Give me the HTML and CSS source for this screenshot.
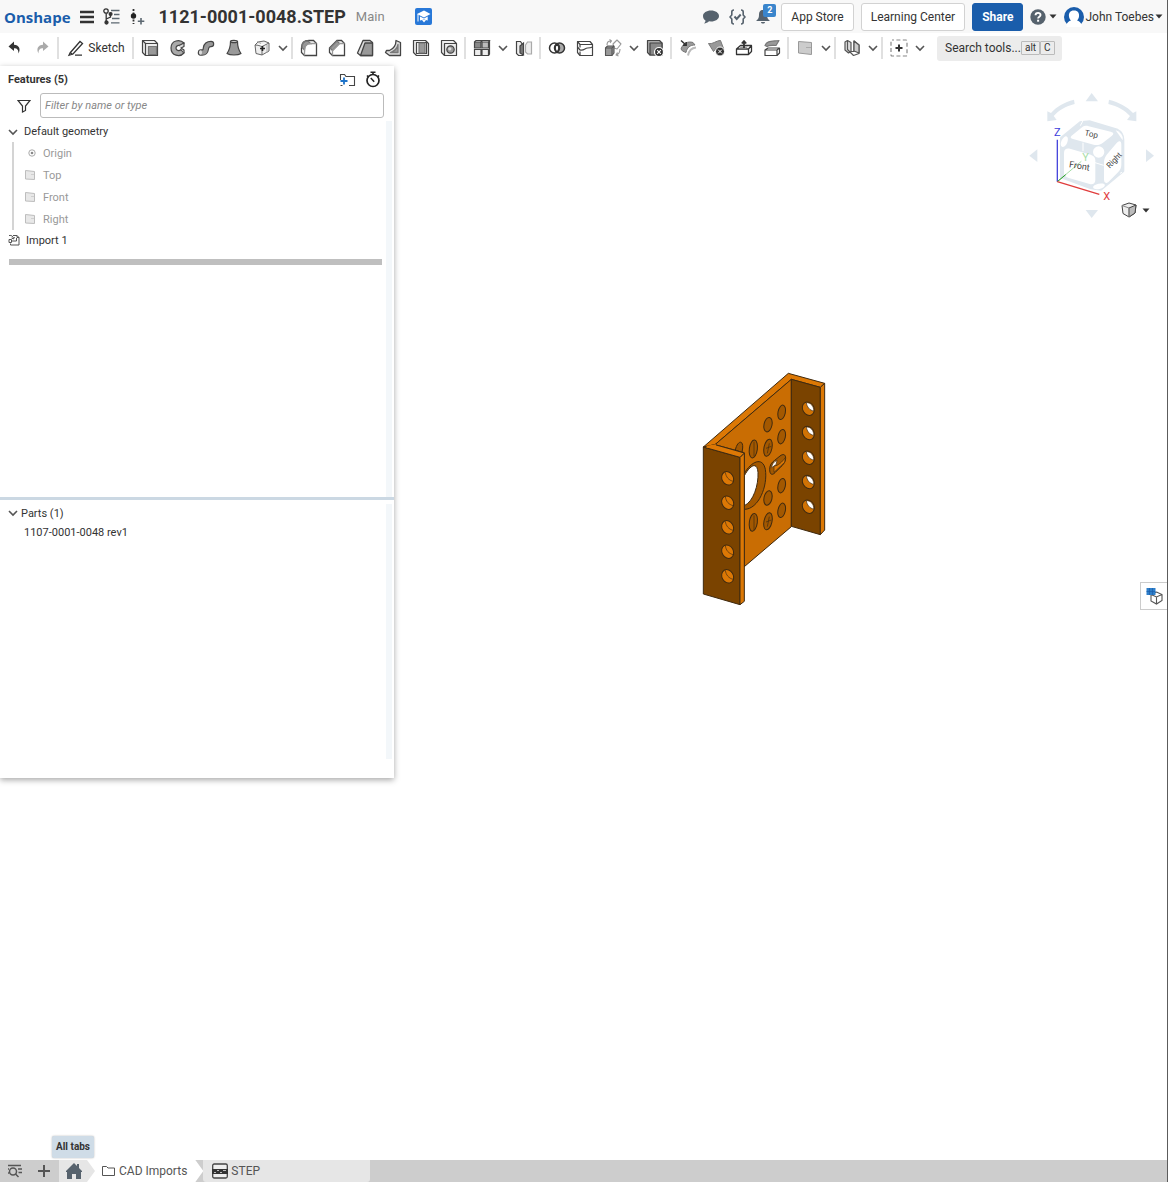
FILE: index.html
```html
<!DOCTYPE html>
<html lang="en">
<head>
    <meta charset="UTF-8">
    <meta name="viewport" content="width=device-width, initial-scale=1.0">
    <title>1121-0001-0048.STEP</title>
    <link rel="stylesheet" href="styles.css">
</head>
<body>

    <!-- shared symbols -->
    <svg class="defs" aria-hidden="true">
        <symbol id="chevron" viewBox="0 0 10 10"><path d="M1 3l4 4 4-4" fill="none" stroke="#555" stroke-width="1.6"/></symbol>
        <symbol id="caret" viewBox="0 0 8 5"><path d="M0.500 0.500h7l-3.500 4z" fill="#333"/></symbol>
        <symbol id="plane" viewBox="0 0 12 12"><path d="M1.500 1.500l9 1v8l-9-.5z" fill="#e8e8e8" stroke="#bdbdbd"/><path d="M7 5.500h3" stroke="#cfcfcf"/></symbol>
    </svg>

    <header class="topbar">
        <a class="logo" href="#">Onshape</a>
        <button class="icon-btn menu" aria-label="Menu">
            <svg width="14" height="14" viewBox="0 0 14 14"><path d="M0 2h14M0 7h14M0 12h14" stroke="#333" stroke-width="2.500"/></svg>
        </button>
        <button class="icon-btn versions" aria-label="Versions and history">
            <svg width="18" height="17" viewBox="0 0 18 17" fill="none" stroke="#333" stroke-width="1.300"><circle cx="3" cy="3" r="2.200"/><path d="M3.200 5.200v9M3.200 11l4.300-2V7"/><circle cx="7.600" cy="6" r="1.400" fill="#333"/><circle cx="3.500" cy="14.500" r="1.500" fill="#333"/><path d="M8 2.500h8.500M11 6.500h5.500M9 10.500h7.500M8 14.800h8.500" stroke="#5b6770"/></svg>
        </button>
        <button class="icon-btn insert" aria-label="Insert new element">
            <svg width="15" height="17" viewBox="0 0 15 17"><path d="M3.500 1v15" stroke="#333" stroke-width="1.800" stroke-dasharray="2 1.500"/><circle cx="3.500" cy="8" r="2.700" fill="#222"/><path d="M11 10v6.500M7.800 13.200h6.500" stroke="#5b6770" stroke-width="1.600"/></svg>
        </button>
        <h1 class="doc-title">1121-0001-0048.STEP</h1>
        <span class="branch">Main</span>
        <button class="icon-btn edu" aria-label="Education">
            <svg width="17" height="17" viewBox="0 0 17 17"><rect width="17" height="17" rx="2" fill="#2878d8"/><path d="M2 6l7-3.500L15.500 6 9 9.500z" fill="#fff"/><path d="M5 8.500v4L9 11.500l3.700 1v-4L9 10.500z" fill="#fff"/><path d="M7 12l2 2.500 2-2.500z" fill="#fff"/><path d="M3 6v7.500" stroke="#fff"/></svg>
        </button>

        <div class="topbar-right">
            <button class="icon-btn" aria-label="Comments">
                <svg width="16" height="14" viewBox="0 0 16 14"><path d="M8 0.500c4.500 0 8 2.400 8 5.500s-3.500 5.500-8 5.500l-2-.2C4.500 12.600 3 13.400 1 13.500c1-.8 1.500-2 1.500-3C1 9.500 0 8 0 6 0 2.900 3.500.500 8 .500z" fill="#56626d"/></svg>
            </button>
            <button class="icon-btn" aria-label="Properties">
                <svg width="17" height="16" viewBox="0 0 17 16" fill="none" stroke="#56626d" stroke-width="1.600"><path d="M5 1C3 1 2.800 1.500 2.800 3v3L1 8l1.800 2v3c0 1.500.2 2 2.200 2M12 1c2 0 2.200.5 2.200 2v3L16 8l-1.800 2v3c0 1.500-.2 2-2.200 2"/><path d="M5.500 7.500l2.200 2.500 4-4.500" stroke-width="2"/></svg>
            </button>
            <button class="icon-btn bell" aria-label="Notifications">
                <svg width="14" height="15" viewBox="0 0 14 15"><path d="M7 1c3 0 4 2 4 5 0 3 1 4 3 6H0c2-2 3-3 3-6 0-3 1-5 4-5zM5 13h4c0 2-4 2-4 0z" fill="#56626d"/></svg>
                <span class="badge">2</span>
            </button>
            <button class="btn">App Store</button>
            <button class="btn">Learning Center</button>
            <button class="btn btn-primary">Share</button>
            <button class="icon-btn help" aria-label="Help">
                <svg width="16" height="16" viewBox="0 0 16 16"><circle cx="8" cy="8" r="7.700" fill="#56626d"/><path d="M5.500 6.300C5.500 3 10.700 3.200 10.500 6c0 1.600-2.400 1.800-2.400 3.500" fill="none" stroke="#fff" stroke-width="1.900"/><rect x="7.100" y="10.700" width="2" height="2" fill="#fff"/></svg>
                <svg width="8" height="5"><use href="#caret"/></svg>
            </button>
            <button class="icon-btn user">
                <svg width="20" height="20" viewBox="0 0 20 20"><circle cx="10" cy="10" r="10" fill="#1a5dab"/><path d="M10 3.500c4 0 5.500 2.700 5 6-.2 1.600-1 3-2 4 2 .7 4 1.500 4.500 4.500V20h-15v-2c.5-3 2.500-3.800 4.500-4.500-1-1-1.800-2.400-2-4-.5-3.300 1-6 5-6z" fill="#fff"/></svg>
                <span>John Toebes</span>
                <svg width="8" height="5"><use href="#caret"/></svg>
            </button>
        </div>
    </header>

    <nav class="toolbar" aria-label="Tools">
        <button class="tool" aria-label="Undo"><svg viewBox="0 0 18 18"><path d="M9 2.500L3.500 7.500 9 12V9.200c3 0 4.500 1.300 4.500 5.300C16 10 14 6 9 5.800z" fill="#333"/></svg></button>
        <button class="tool" aria-label="Redo"><svg viewBox="0 0 18 18"><path d="M10 2.500l5.500 5-5.500 4.500V9.200c-3 0-4.500 1.300-4.500 5.300C3 10 5 6 10 5.800z" fill="#aaa"/></svg></button>
        <span class="sep"></span>
        <button class="tool tool-sketch"><svg viewBox="0 0 18 18" fill="none" stroke="#333" stroke-width="1.300"><path d="M3 14L13 2.500l2.500 2L6 15l-4 1.300zM3 13.500l2.800 2M8 16.200h7"/></svg>Sketch</button>
        <span class="sep"></span>
        <button class="tool" aria-label="Extrude"><svg viewBox="0 0 18 18" stroke="#444" stroke-width="1.200" stroke-linejoin="round"><path d="M1.500 1.500h12l3 3v12h-12l-3-3z" fill="#eee"/><path d="M1.500 1.500l3 3h12M4.500 4.500v12" fill="none"/><path d="M7.500 7.500h8v8h-8z" fill="#999" stroke="#777"/></svg></button>
        <button class="tool" aria-label="Revolve"><svg viewBox="0 0 18 18" stroke="#444" stroke-width="1.200" stroke-linejoin="round"><path d="M15 4C11 0 2 1 2 9s9 9.500 13 5l-3-3.500c-2 2-5 1-5-1.500s3-3.500 5-1.500z" fill="#aaa"/><path d="M10 6.500l5-2.500v3.500l-3 1.500 3 2V14" fill="#ddd"/></svg></button>
        <button class="tool" aria-label="Sweep"><svg viewBox="0 0 18 18" stroke-linecap="round"><path d="M4 13.500c4.500.5 4.500-1.500 5-4.500s2-4 5-4" fill="none" stroke="#444" stroke-width="6.500"/><path d="M4 13.500c4.500.5 4.500-1.500 5-4.500s2-4 5-4" fill="none" stroke="#999" stroke-width="4.200"/><ellipse cx="3.500" cy="13.500" rx="1.500" ry="2.200" fill="#ddd"/></svg></button>
        <button class="tool" aria-label="Loft"><svg viewBox="0 0 18 18" stroke="#444" stroke-width="1.200" stroke-linejoin="round"><path d="M5.500 2.500C5.500 7 4.500 11 2 14.500c3 2 11 2 14 0-2.500-3.500-3.500-7.500-3.500-12z" fill="#999"/><ellipse cx="9" cy="2.500" rx="3.500" ry="1.200" fill="#ccc"/></svg></button>
        <button class="tool" aria-label="Thicken"><svg viewBox="0 0 18 18" fill="none" stroke="#666"><path d="M2 6l3-3 6-1 5 2v8l-7 4-6-1.500zM2 6c3 0 5 1 7 1.500L16 4M9 7.500V16" fill="#eee"/><path d="M4 2.500l4 2M14 6v8" stroke="#aaa"/><path d="M9.500 7v5M7 9.500h5" stroke="#222" stroke-width="1.600"/></svg></button>
        <button class="tool-more" aria-label="More solid tools"><svg><use href="#chevron"/></svg></button>
        <span class="sep"></span>
        <button class="tool" aria-label="Fillet"><svg viewBox="0 0 18 18" stroke="#444" stroke-width="1.300"><path d="M1.500 9c0-5 2.500-7.500 7.500-7.500h4.500l3 3v12h-12l-3-3z" fill="#fff"/><path d="M4.500 11c0-4 2-6.500 6-6.500L8 2C4 2 2 4 2 8.500z" fill="#999" stroke="#777"/><path d="M4.500 16.500V11c0-4 2-6.500 6-6.500h6" fill="none" stroke="#999"/></svg></button>
        <button class="tool" aria-label="Chamfer"><svg viewBox="0 0 18 18" stroke="#444" stroke-width="1.300"><path d="M1.500 9L9 1.500h4.500l3 3v12h-12l-3-3z" fill="#fff"/><path d="M2 9l7-7 2.500 2.500-7 7z" fill="#999" stroke="#777"/><path d="M4.500 16.500v-5l7-7h5" fill="none" stroke="#999"/></svg></button>
        <button class="tool" aria-label="Draft"><svg viewBox="0 0 18 18" stroke="#444" stroke-width="1.300" stroke-linejoin="round"><path d="M7 1.500h7l2.500 2v13h-12L1.500 14z" fill="#ddd"/><path d="M9 4h7.500v12.500h-12z" fill="#999"/></svg></button>
        <button class="tool" aria-label="Rib"><svg viewBox="0 0 18 18" stroke="#444" stroke-width="1.300" stroke-linejoin="round"><path d="M12 1.500l4.500 2v13h-11l-4-3 1-2h3C10 9.500 12 6 12 1.500z" fill="#ddd"/><path d="M14 5.500v8H6.500C11 12 13 10 14 5.500z" fill="#999" stroke="#777"/></svg></button>
        <button class="tool" aria-label="Shell"><svg viewBox="0 0 18 18" stroke="#444" stroke-width="1.200" stroke-linejoin="round"><path d="M1.500 1.500h12l3 3v12h-12l-3-3z" fill="#eee"/><path d="M4.500 3.500h10v11h-10z" fill="#fff"/><path d="M7 4h6v10H7z" fill="#999" stroke="#777"/></svg></button>
        <button class="tool" aria-label="Hole"><svg viewBox="0 0 18 18" stroke="#444" stroke-width="1.200" stroke-linejoin="round"><path d="M1.500 1.500h12l3 3v12h-12l-3-3z" fill="#eee"/><path d="M4.500 16V4.500H16" fill="none"/><circle cx="10.500" cy="10.500" r="3.700" fill="#999"/><circle cx="9.800" cy="9.800" r="1.600" fill="#ddd" stroke="none"/></svg></button>
        <span class="sep"></span>
        <button class="tool" aria-label="Linear pattern"><svg viewBox="0 0 18 18" stroke="#444" stroke-width="1.200"><path d="M1.500 3h6.500v6H1.500z" fill="#888"/><path d="M9 3h6.500v6H9z" fill="#bbb"/><path d="M1.500 10.500h6.500v6H1.500zM9 10.500h6.500v6H9z" fill="#eee"/><path d="M1.500 3L3 1.500h5.500L8 3l1.500-1.500h7L15.500 3M16.500 1.500V15l-1 1.500" fill="none"/></svg></button>
        <button class="tool-more" aria-label="More patterns"><svg><use href="#chevron"/></svg></button>
        <button class="tool" aria-label="Mirror"><svg viewBox="0 0 18 18" stroke="#444" stroke-width="1.200"><path d="M1.500 2.500h4l2 3v11h-4l-2-2z" fill="#eee"/><path d="M5 7l3.500-3v12L5 14z" fill="#777"/><path d="M10.500 6l2-3h4v12h-4l-2-2z" fill="#eee" stroke="#aaa"/></svg></button>
        <span class="sep"></span>
        <button class="tool" aria-label="Boolean"><svg viewBox="0 0 18 18" stroke="#333" stroke-width="1.500"><circle cx="11.500" cy="9" r="5" fill="#aaa"/><circle cx="6.500" cy="9" r="5" fill="none"/><path d="M9 5c2.500 2 2.500 6 0 8-2.500-2-2.500-6 0-8z" fill="#fff"/></svg></button>
        <button class="tool" aria-label="Split"><svg viewBox="0 0 18 18" fill="none" stroke="#444" stroke-width="1.200" stroke-linejoin="round"><path d="M1.500 2.500h12.500l2.500 3v11H4l-2.500-3z" fill="#fff"/><path d="M1.500 2.500l2.500 3h12.500M4 5.500v3M4 12.500v4"/><path d="M1.500 8l2.500 3c4 1 5-2 7.500-2s3 0 5-1"/></svg></button>
        <button class="tool" aria-label="Transform"><svg viewBox="0 0 18 18" fill="none" stroke="#999" stroke-width="1.100" stroke-linejoin="round"><path d="M9 5l4-4 4 4-4 5-3-1zM3 6c0-3 1-4 4-4M5.500 .5L7.500 2 6 4M16 10c0 4-2 5.500-4 6M13.500 13.500L12 16l2.500 1"/><path d="M1.500 9l2-2H10v7l-2 2.500H1.500z" fill="#999" stroke="#555"/><path d="M1.500 9H8v7.500M8 9l2-2" stroke="#555"/></svg></button>
        <button class="tool-more" aria-label="More transform tools"><svg><use href="#chevron"/></svg></button>
        <button class="tool" aria-label="Delete part"><svg viewBox="0 0 18 18" stroke="#444" stroke-width="1.200" stroke-linejoin="round"><path d="M1.500 1.500h12l2.500 2.500v12H4l-2.500-2.500z" fill="#aaa"/><path d="M4 4h12v12H4z" fill="#888"/><circle cx="13" cy="13" r="4.500" fill="#333" stroke="#fff"/><path d="M11.200 11.200l3.600 3.600M14.800 11.200l-3.600 3.600" stroke="#fff"/></svg></button>
        <span class="sep"></span>
        <button class="tool" aria-label="Modify fillet"><svg viewBox="0 0 18 18" stroke="#777"><path d="M2 10c2-6 7-8 12-6.500l2 2.500C11 6 8 8.500 7 13.500L3.500 12z" fill="#999"/><path d="M9 16.500c1-5 3.500-7.500 8-8" fill="none" stroke="#bbb" stroke-width="2"/><path d="M2 1.500l5 4.500M7.200 3v3.200H4" fill="none" stroke="#333" stroke-width="1.500"/></svg></button>
        <button class="tool" aria-label="Delete face"><svg viewBox="0 0 18 18" stroke="#777"><path d="M1.500 4.500c4 1 8-3 12-3l3 8c-5-1-8 0-10 3z" fill="#999"/><circle cx="13" cy="12.500" r="4.500" fill="#333" stroke="#fff"/><path d="M11.200 10.700l3.600 3.600M14.800 10.700l-3.600 3.600" stroke="#fff"/></svg></button>
        <button class="tool" aria-label="Move face"><svg viewBox="0 0 18 18" fill="none" stroke="#333" stroke-width="1.300" stroke-linejoin="round"><path d="M1.500 10l4-3.500h11l-3 3.500v5.500h-12zM1.500 10h12M13.500 15.500l3-3V7"/><path d="M4 9.500l2-2h7l-2 2z" fill="#999" stroke="none"/><path d="M9 9V3M6.800 4.500L9 2l2.200 2.500" stroke-width="1.800"/></svg></button>
        <button class="tool" aria-label="Replace face"><svg viewBox="0 0 18 18" fill="none" stroke="#444" stroke-width="1.200" stroke-linejoin="round"><path d="M2 11l3-2h11.500l-2.500 2v5.500H2zM2 11h12M14 16.500l2.500-2.500V9"/><path d="M2 6.500c2-5 7-4 14-5l-3 5c-4 0-7-.5-9 1z" fill="#999" stroke="#777"/></svg></button>
        <span class="sep"></span>
        <button class="tool" aria-label="Plane"><svg viewBox="0 0 18 18"><path d="M2.500 2.500l13 1v12l-13-1.500z" fill="#ccc" stroke="#999"/><path d="M10 8.500h5" stroke="#aaa"/></svg></button>
        <button class="tool-more" aria-label="More planes"><svg><use href="#chevron"/></svg></button>
        <span class="sep"></span>
        <button class="tool" aria-label="Sheet metal"><svg viewBox="0 0 18 18" stroke="#555" stroke-width="1.200" stroke-linejoin="round"><path d="M2 3l2.500-1.500L8 3.500v9L5.500 14 2 11z" fill="#ddd"/><path d="M4.500 1.500v9l6 6 5.500-2V6l-5-4v10.500L8 12.500" fill="none"/><path d="M11 2l5 4v8l-5-2z" fill="#ccc"/></svg></button>
        <button class="tool-more" aria-label="More sheet metal tools"><svg><use href="#chevron"/></svg></button>
        <span class="sep"></span>
        <button class="tool" aria-label="Add custom feature"><svg viewBox="0 0 18 18" fill="none"><rect x="1" y="1" width="16" height="16" rx="1" stroke="#888" stroke-width="1.200" stroke-dasharray="4 2.400" stroke-dashoffset="2"/><path d="M9 5.500v7M5.500 9h7" stroke="#333" stroke-width="2"/></svg></button>
        <button class="tool-more" aria-label="More custom features"><svg><use href="#chevron"/></svg></button>
        <button class="search-tools">Search tools... <kbd>alt</kbd><kbd>C</kbd></button>
    </nav>

    <main class="workspace">
        <aside class="panel">
            <section class="features">
                <div class="panel-head">
                    <h2>Features (5)</h2>
                    <button class="icon-btn" aria-label="Add folder">
                        <svg width="17" height="14" viewBox="0 0 17 14" fill="none"><path d="M1.500 5V1.500h4l1.500 2h8.500v9H10" stroke="#444" stroke-width="1.100"/><path d="M1.500 5v2M1.500 12.500h2" stroke="#444"/><path d="M5 4.500v7M1.500 8h7" stroke="#1d73c9" stroke-width="1.800"/></svg>
                    </button>
                    <button class="icon-btn" aria-label="Regeneration times">
                        <svg width="16" height="17" viewBox="0 0 16 17" fill="none" stroke="#222"><circle cx="8" cy="9.500" r="6" stroke-width="1.700"/><path d="M5.500 1.200h5M8 1.500v2M2 4.500l1.200 1.200M14 4.500l-1.200 1.200" stroke-width="1.600"/><path d="M5.800 7l3.400 3.700" stroke-width="1.500"/></svg>
                    </button>
                </div>
                <div class="filter">
                    <label for="filter" aria-label="Filter">
                        <svg width="14" height="14" viewBox="0 0 14 14"><path d="M1 1.500h12L8.500 7v4.500l-3 1.500V7z" fill="none" stroke="#333" stroke-width="1.200"/></svg>
                    </label>
                    <input type="text" id="filter" placeholder="Filter by name or type">
                </div>
                <div class="tree">
                    <div class="tree-group"><svg class="toggle"><use href="#chevron"/></svg>Default geometry</div>
                    <ul class="tree-items">
                        <li><svg width="12" height="12" viewBox="0 0 12 12"><circle cx="8" cy="6" r="3.200" fill="none" stroke="#aaa"/><circle cx="8" cy="6" r="1.300" fill="#888"/></svg>Origin</li>
                        <li><svg width="12" height="12"><use href="#plane"/></svg>Top</li>
                        <li><svg width="12" height="12"><use href="#plane"/></svg>Front</li>
                        <li><svg width="12" height="12"><use href="#plane"/></svg>Right</li>
                    </ul>
                    <div class="tree-import">
                        <svg width="12" height="12" viewBox="0 0 12 12" fill="none" stroke="#555"><path d="M5 1.500h4l2 2v7.500H2.500V9.500M9 1.500v2h2"/><path d="M1 1.500c3-.5 4 1 4.500 3M3.500 4l2 1 1-2M1 5.500h2.500v3H1zM3.500 7h5V4"/></svg>
                        Import 1
                    </div>
                    <div class="rollback"></div>
                </div>
            </section>
            <section class="parts">
                <h3><svg class="toggle"><use href="#chevron"/></svg>Parts (1)</h3>
                <p>1107-0001-0048 rev1</p>
            </section>
        </aside>

        <div class="viewport">
            <svg class="part" width="150" height="255" viewBox="0 0 450 765" stroke="#3f2a10" stroke-width="3" stroke-linejoin="round">
                <!-- web and rear flange -->
                <path d="M40 261L295 40l109 30-13 12-87-24L75 254z" fill="#dc7805"/>
                <path d="M304 58L75 254l88 24v342l141-120z" fill="#c96d03"/>
                <path d="M304 58l87 24v442l-87-25z" fill="#7a4300"/>
                <path d="M391 82l13-12v440l-13 14z" fill="#dc7805"/>
                <g fill="#a35800">
                    <ellipse cx="275" cy="157" rx="11" ry="22" transform="rotate(12 275 157)"/>
                    <ellipse cx="234" cy="194" rx="12" ry="22" transform="rotate(12 234 194)"/>
                    <ellipse cx="275" cy="230" rx="11" ry="22" transform="rotate(12 275 230)"/>
                    <ellipse cx="234" cy="263" rx="12" ry="26" transform="rotate(12 234 263)"/>
                    <ellipse cx="190" cy="267" rx="12" ry="27" transform="rotate(8 190 267)"/>
                    <path d="M136 270c6-28 24-32 22-6l-2 13z"/>
                    <ellipse cx="275" cy="377" rx="11" ry="22" transform="rotate(12 275 377)"/>
                    <ellipse cx="234" cy="414" rx="12" ry="22" transform="rotate(12 234 414)"/>
                    <ellipse cx="275" cy="451" rx="11" ry="22" transform="rotate(12 275 451)"/>
                    <ellipse cx="234" cy="484" rx="12" ry="26" transform="rotate(12 234 484)"/>
                    <ellipse cx="190" cy="487" rx="12" ry="27" transform="rotate(8 190 487)"/>
                    <path d="M239 328c0-14 7-21 15-27l16-13c9-7 17-6 17 7-1 11-6 18-14 25l-18 18c-10 10-16 4-16-10z"/>
                </g>
                <path d="M245 323c1-11 6-17 16-22l-3 13z" fill="#fff" stroke-width="2"/>
                <path d="M252 318c12 0 24-12 34-25l-2 14-32 30z" fill="#dc7805" stroke-width="2"/>
                <path d="M192 245v44M238 250l-6 30M192 466v44M238 470l-6 30M228 265l16-6M228 486l16-6" fill="none" stroke-width="2"/>
                <path d="M163 340c20-35 55-52 63-12 8 50-20 120-63 120z" fill="#a35800"/>
                <path d="M163 347c15-28 38-46 41-10 2 38-14 88-41 100z" fill="#fff"/>
                <!-- front flange -->
                <path d="M40 261l110 31v442L40 702z" fill="#7a4300"/>
                <path d="M150 292l13-13v445l-13 10z" fill="#dc7805"/>
                <path d="M40 261l35-7 88 25-13 13z" fill="#dc7805"/>
                <path d="M50 260l28-4" stroke="#dc7805" stroke-width="6"/>
                <g>
                    <g id="rear-hole"><ellipse cx="355" cy="146" rx="17" ry="21" transform="rotate(-30 355 146)" fill="#d07204"/><path d="M349 128c2 13 10 23 22 25 1-14-9-26-22-25z" fill="#fff" stroke-width="2"/></g>
                    <use href="#rear-hole" y="73"/><use href="#rear-hole" y="147"/><use href="#rear-hole" y="220"/><use href="#rear-hole" y="294"/>
                </g>
                <g>
                    <g id="front-hole"><ellipse cx="113" cy="355" rx="17" ry="21" transform="rotate(-30 113 355)" fill="#dc7805"/><path d="M106 337c2 14 10 24 24 27" fill="none" stroke-width="2"/></g>
                    <use href="#front-hole" y="73"/><use href="#front-hole" y="147"/><use href="#front-hole" y="220"/><use href="#front-hole" y="294"/>
                </g>
            </svg>

            <svg class="view-cube" width="158" height="150" viewBox="0 0 474 450">
                <g fill="#dfe7ee">
                    <path d="M245 39l19 25h-37zM245 414l19-24h-37zM58 227l24-19v38zM432 227l-24-19v38z"/>
                    <path d="M192 59c-30 8-52 20-69 40l-11-5v30l28-4-9-12c15-17 36-29 63-36zM297 59c30 8 54 20 72 40l10-5v30l-28-4 9-12c-16-17-37-29-65-36z"/>
                    <path d="M154 174l56-46 30-3 80 24c12 6 19 18 19 30v94l-66 55-30-4-89-33z" stroke="#dfe7ee" stroke-width="8" stroke-linejoin="round"/>
                </g>
                <g fill="#fff">
                    <path d="M184 168l34-28c5-3 12-3 18-1l66 16c10 3 10 7 3 13l-26 20c-8 6-18 9-28 6l-62-17c-7-2-9-5-5-9z"/>
                    <path d="M162 218c0-12 9-14 18-12l62 18c9 3 14 8 14 17v58c0 12-8 15-17 13l-65-19c-8-3-12-7-12-14z"/>
                    <path d="M282 248c0-14 7-23 15-32l23-27c8-8 14-7 14 5v60c0 10-4 17-10 23l-28 28c-8 7-14 4-14-7z"/>
                    <circle cx="266" cy="216" r="17"/>
                    <ellipse cx="163" cy="185" rx="9" ry="17" transform="rotate(24 163 185)"/>
                    <ellipse cx="267" cy="319" rx="18" ry="8" transform="rotate(-12 267 319)"/>
                    <path d="M317 151c10 3 17 10 21 20v10z"/>
                </g>
                <path d="M219 188v25M255 248l26 8M219 122l-8 15M330 280l6-3" stroke="#fff" stroke-width="3"/>
                <path d="M142 305V179" stroke="#4848dc" stroke-width="4"/>
                <path d="M142 305l72-61" stroke="#a7dda7" stroke-width="3"/>
                <path d="M142 305l25-21" stroke="#28a028" stroke-width="3"/>
                <path d="M142 305l126 38" stroke="#e03c3c" stroke-width="4"/>
                <g class="cube-face">
                    <text x="223" y="166" class="small" transform="rotate(12 223 166)">Top</text>
                    <text x="176" y="262" transform="rotate(9 176 262)">Front</text>
                    <text x="299" y="266" class="small" transform="rotate(-46 299 266)">Right</text>
                </g>
                <g class="axis">
                    <text x="132" y="169" fill="#3c3cdc">Z</text>
                    <text x="217" y="243" fill="#a7dda7">Y</text>
                    <text x="280" y="361" fill="#e03c3c">X</text>
                </g>
            </svg>
            <button class="icon-btn view-menu" aria-label="View options">
                <svg width="16" height="16" viewBox="0 0 16 16" stroke="#444" stroke-linejoin="round"><path d="M1 3.500L8 1l7 2-1 8-6 4-6-3.500z" fill="#eee"/><path d="M8 6l7-3-1 8-6 4z" fill="#bbb"/><path d="M1 3.500L8 6v9" fill="none" stroke="#888"/></svg>
                <svg width="8" height="5"><use href="#caret"/></svg>
            </button>
            <button class="icon-btn side-tab" aria-label="Configuration panel">
                <svg width="17" height="18" viewBox="0 0 17 18"><path d="M10.500 5L16 7.500v6l-5.500 3.500L5 14V7.500zM5 7.500l5.500 2.500L16 7.500M10.500 10v7" fill="#fff" stroke="#555" stroke-width="1.100"/><path d="M0.500 1h9v7h-9z" fill="#2e7fca"/><path d="M.5 4.500h9M3.500 1v7M6.500 1v7" stroke="#1a5dab" stroke-width=".7"/></svg>
            </button>
        </div>
    </main>

    <footer class="tabbar">
        <button class="icon-btn tab-icon" aria-label="Search tabs">
            <svg width="16" height="14" viewBox="0 0 16 14" fill="none" stroke="#555" stroke-width="1.500"><path d="M1 1.500h13M11 5h4M11.500 8.500H15"/><circle cx="6" cy="7.500" r="3.500"/><path d="M8.500 10l3 3M1 5h1M1 9h1"/></svg>
        </button>
        <button class="icon-btn tab-icon" aria-label="Create tab">
            <svg width="14" height="14" viewBox="0 0 14 14"><path d="M7 1v12M1 7h12" stroke="#555" stroke-width="2"/></svg>
        </button>
        <div class="crumbs">
            <button class="icon-btn home" aria-label="All tabs">
                <svg width="16" height="16" viewBox="0 0 16 16"><path d="M8 0l3 3V1h2v4l3 3v1h-1v7h-5v-5H6v5H1V9H0V8z" fill="#56626d"/></svg>
            </button>
            <span class="tooltip" role="tooltip">All tabs</span>
            <button class="folder">
                <svg width="13" height="12" viewBox="0 0 13 12"><path d="M.5 1.500h4l1.500 1.500h6.500v7.500H.5z" fill="none" stroke="#555"/></svg>
                CAD Imports
            </button>
        </div>
        <button class="doc-tab">
            <svg width="16" height="16" viewBox="0 0 16 16"><rect x=".7" y="1" width="14.600" height="14" rx="1.500" fill="#eee" stroke="#444" stroke-width="1.300"/><rect y="6" width="16" height="5" fill="#333"/><path d="M2 9.500h2M5 7.500h2M8 9.500h2M11 7.500h3" stroke="#bbb"/></svg>
            STEP
        </button>
    </footer>

</body>
</html>
```
FILE: styles.css
```css
* {
    box-sizing: border-box;
}

body {
    margin: 0;
    min-height: 100vh;
    display: flex;
    flex-direction: column;
    font-family: Roboto, "Liberation Sans", sans-serif;
    font-size: 12px;
    color: #333;
    background-color: #fff;
    border-right: 1px solid #5c5c5c;
}

button {
    font: inherit;
    color: inherit;
    margin: 0;
    cursor: pointer;
}

.defs {
    position: absolute;
    width: 0;
    height: 0;
}

.icon-btn {
    display: inline-flex;
    align-items: center;
    padding: 0;
    border: none;
    background: none;
}

/* Top bar */
.topbar {
    display: flex;
    align-items: center;
    height: 33px;
    padding: 0 4px;
    background-color: #f8f8f8;
}

.logo {
    font-family: "Open Sans", sans-serif;
    font-size: 15px;
    font-weight: bold;
    color: #1a5dab;
    text-decoration: none;
}

.menu,
.versions,
.insert {
    margin-left: 9px;
}

.doc-title {
    margin: 0 10px 0 14px;
    font-size: 18px;
    line-height: 24px;
    font-weight: bold;
}

.branch {
    font-size: 13px;
    color: #888;
}

.edu {
    margin-left: 30px;
}

.topbar-right {
    display: flex;
    align-items: center;
    gap: 7px;
    margin-left: auto;
}

.topbar-right .icon-btn + .icon-btn {
    margin-left: 3px;
}

.bell {
    position: relative;
    margin-right: 4px;
}

.badge {
    position: absolute;
    left: 7px;
    top: -5px;
    width: 13px;
    height: 13px;
    font-size: 9px;
    line-height: 13px;
    font-weight: bold;
    text-align: center;
    color: #fff;
    background-color: #3a85cc;
    border-radius: 2px;
}

.btn {
    height: 28px;
    padding: 0 9px;
    background-color: #fff;
    border: 1px solid #d2d2d2;
    border-radius: 3px;
}

.btn-primary {
    color: #fff;
    font-weight: bold;
    background-color: #1a5dab;
    border-color: #1a5dab;
}

.help {
    gap: 3px;
}

.topbar-right .help + .user {
    gap: 1px;
    margin-left: 0;
}

/* Toolbar */
.toolbar {
    display: flex;
    align-items: center;
    height: 30px;
    background-color: #fff;
}

.tool {
    display: flex;
    align-items: center;
    justify-content: center;
    width: 28px;
    height: 26px;
    padding: 0;
    border: none;
    background: none;
}

.tool svg {
    width: 18px;
    height: 18px;
}

.tool-sketch {
    width: 70px;
    gap: 3px;
}

.tool-more {
    display: flex;
    align-items: center;
    justify-content: center;
    width: 14px;
    height: 26px;
    padding: 0;
    border: none;
    background: none;
}

.tool-more svg,
.toggle {
    width: 10px;
    height: 10px;
}

.sep {
    width: 2px;
    height: 22px;
    margin: 0 2px 0 1px;
    background-color: #e0e0e0;
}

.search-tools {
    display: flex;
    align-items: center;
    height: 25px;
    margin-left: 10px;
    padding: 0 7px 0 8px;
    background-color: #ececec;
    border: none;
    border-radius: 3px;
}

kbd {
    padding: 0 3px;
    font-family: inherit;
    font-size: 10px;
    line-height: 12px;
    border: 1px solid #bbb;
    border-radius: 1px;
}

/* Workspace */
.workspace {
    flex: 1;
    display: flex;
    align-items: flex-start;
}

.panel {
    flex: none;
    width: 394px;
    margin-top: 3px;
    padding-bottom: 19px;
    font-size: 11px;
    background-color: #fff;
    box-shadow: 0 2px 6px rgba(0, 0, 0, 0.35);
}

.panel-head {
    display: flex;
    align-items: center;
    gap: 9px;
    height: 27px;
    padding: 0 13px 0 8px;
}

.panel-head h2 {
    flex: 1;
    margin: 0;
    font-size: 11px;
    font-weight: bold;
}

.filter {
    display: flex;
    align-items: center;
    padding: 0 10px 0 17px;
}

.filter label {
    display: flex;
    width: 23px;
}

.filter input {
    flex: 1;
    height: 25px;
    padding: 0 4px;
    font: inherit;
    border: 1px solid #bbb;
    border-radius: 3px;
}

.filter input::placeholder {
    font-style: italic;
    color: #888;
}

.tree,
.parts {
    margin-right: 2px;
    border-right: 6px solid #f3f7fa;
}

.tree {
    min-height: 376px;
    margin-top: 3px;
}

.tree-group,
.tree-items li,
.tree-import {
    display: flex;
    align-items: center;
}

.tree-group {
    gap: 6px;
    height: 21px;
    padding-left: 8px;
}

.tree-items {
    list-style: none;
    margin: 0 0 0 12px;
    padding: 0;
    color: #999;
    border-left: 2px solid #d4d4d4;
}

.tree-items li {
    gap: 7px;
    height: 22px;
    padding-left: 10px;
}

.tree-import {
    gap: 6px;
    height: 20px;
    padding-left: 8px;
}

.rollback {
    height: 6px;
    margin: 9px 4px 0 9px;
    background-color: #bfbfbf;
}

.features {
    border-bottom: 3px solid #cbd8e3;
}

.parts {
    min-height: 255px;
    margin-top: 4px;
}

.parts h3 {
    display: flex;
    align-items: center;
    gap: 3px;
    height: 18px;
    margin: 0;
    padding-left: 8px;
    font-size: 11px;
    font-weight: normal;
}

.parts p {
    margin: 0;
    padding-left: 24px;
    line-height: 22px;
}

/* 3D view */
.viewport {
    flex: 1;
    align-self: stretch;
    position: relative;
}

.part {
    position: absolute;
    left: 296px;
    top: 297px;
}

.view-cube {
    position: absolute;
    right: -1px;
    top: 17px;
}

.cube-face {
    font-size: 27px;
    fill: #444;
}

.cube-face .small {
    font-size: 24px;
}

.axis {
    font-size: 33px;
}

.view-menu {
    position: absolute;
    right: 17px;
    top: 139px;
    gap: 5px;
}

.side-tab {
    position: absolute;
    right: 0;
    top: 519px;
    width: 27px;
    height: 28px;
    padding-left: 5px;
    background-color: #fff;
    border: 1px solid #ccc;
    border-right: none;
}

/* Bottom tabs */
.tabbar {
    display: flex;
    height: 22px;
    color: #555;
    background-color: #cdcdcd;
}

.tab-icon {
    width: 29px;
    justify-content: center;
}

.crumbs {
    position: relative;
    display: flex;
    margin-left: 1px;
    background-color: #fff;
}

.home {
    width: 36px;
    padding-left: 7px;
    background-color: #e6e6e6;
    clip-path: polygon(0 0, 28px 0, 100% 50%, 28px 100%, 0 100%);
}

.tooltip {
    position: absolute;
    left: -7px;
    bottom: 24px;
    padding: 0 4px;
    font-size: 10px;
    line-height: 22px;
    font-weight: bold;
    white-space: nowrap;
    color: #333;
    background-color: #cfdce7;
    border-radius: 2px;
    box-shadow: 0 0 2px rgba(0, 0, 0, 0.3);
}

.folder,
.doc-tab {
    display: flex;
    align-items: center;
    gap: 4px;
    border: none;
}

.folder {
    padding: 0 8px 0 7px;
    background-color: #fff;
}

.crumbs::after {
    content: "";
    width: 8px;
    background-color: #cdcdcd;
    clip-path: polygon(0 0, 100% 0, 100% 100%, 0 100%, 100% 50%);
}

.doc-tab {
    flex: 0 1 167px;
    gap: 3px;
    padding: 0 9px;
    background-color: #e6e6e6;
    border-radius: 0 0 3px 3px;
}
```
